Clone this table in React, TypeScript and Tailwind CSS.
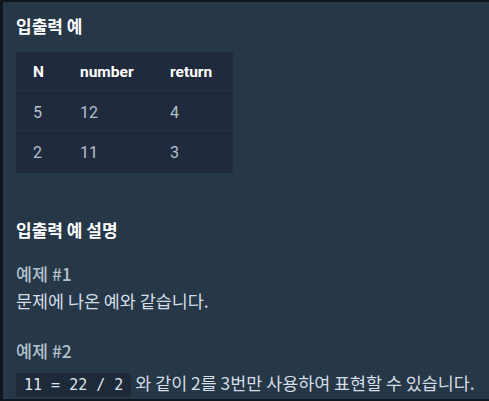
export default function App() {
  const rows = [
    ["5", "12", "4"],
    ["2", "11", "3"],
  ]
  return (
    <div className="w-[489px] h-[401px] bg-[#10161d] pl-[3px] pt-[2px] pb-[2px] overflow-hidden">
      <div
        className="h-full bg-[#263747] pl-[13px] text-[#d5dde6]"
        style={{ fontFamily: '"Noto Sans CJK KR", "Noto Sans", Roboto, sans-serif' }}
      >
        <h5 className="pt-[13px] text-[17px] leading-[22px] font-bold text-white">입출력 예</h5>

        <table className="mt-[15px] bg-[#1f2a3c] border-collapse" style={{ fontFamily: 'Roboto, "Noto Sans CJK KR", sans-serif' }}>
          <thead>
            <tr className="h-[41px] text-[15.5px] font-bold text-white text-left">
              <th className="w-[47px] pl-[17px]">N</th>
              <th className="w-[90px] pl-[17px]">number</th>
              <th className="w-[80px] pl-[17px]">return</th>
            </tr>
          </thead>
          <tbody>
            {rows.map((r, i) => (
              <tr key={i} className="h-[40px] border-t border-[#172130] text-[16px] text-[#b2c0cc]">
                {r.map((c, j) => (
                  <td key={j} className="pl-[17px]">{c}</td>
                ))}
              </tr>
            ))}
          </tbody>
        </table>

        <h5 className="mt-[46px] text-[17px] leading-[22px] font-bold text-white">입출력 예 설명</h5>

        <div className="mt-[19px] text-[17.4px] leading-[27px]">
          <p className="text-[#b2c0cc] font-medium">예제 #1</p>
          <p>문제에 나온 예와 같습니다.</p>
          <p className="mt-[23px] text-[#b2c0cc] font-medium">예제 #2</p>
          <p className="mt-[6px] leading-[26px]">
            <code
              className="inline-block h-[24px] leading-[24px] px-[8px] rounded-[3px] bg-[#1e2a3a] text-[15px] text-[#dfe6ec]"
              style={{ fontFamily: '"DejaVu Sans Mono", monospace' }}
            >
              11 = 22 / 2
            </code>{" "}
            와 같이 2를 3번만 사용하여 표현할 수 있습니다.
          </p>
        </div>
      </div>
    </div>
  )
}
